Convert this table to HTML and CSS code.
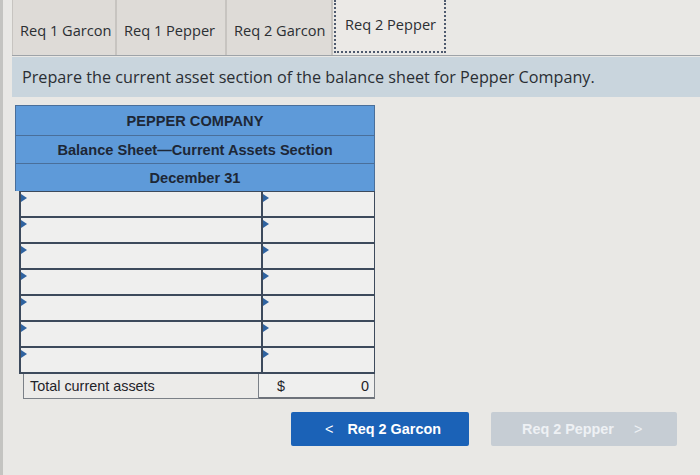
FILE: index.html
```html
<!DOCTYPE html>
<html>
<head>
<meta charset="utf-8">
<link rel="stylesheet" href="styles.css">
</head>
<body>
<div class="app">
  <div class="tabs">
    <div class="tab t1">Req 1 Garcon</div>
    <div class="tab t2">Req 1 Pepper</div>
    <div class="tab t3">Req 2 Garcon</div>
    <div class="tab active">Req 2 Pepper</div>
  </div>
  <div class="prompt">Prepare the current asset section of the balance sheet for Pepper Company.</div>
  <div class="sheet">
    <div class="head">PEPPER COMPANY</div>
    <div class="head">Balance Sheet—Current Assets Section</div>
    <div class="head">December 31</div>
    <div class="rows">
      <div class="row"><div class="cell label"></div><div class="cell amt"></div></div>
      <div class="row"><div class="cell label"></div><div class="cell amt"></div></div>
      <div class="row"><div class="cell label"></div><div class="cell amt"></div></div>
      <div class="row"><div class="cell label"></div><div class="cell amt"></div></div>
      <div class="row"><div class="cell label"></div><div class="cell amt"></div></div>
      <div class="row"><div class="cell label"></div><div class="cell amt"></div></div>
      <div class="row"><div class="cell label"></div><div class="cell amt"></div></div>
    </div>
    <div class="total">
      <div class="tlabel">Total current assets</div>
      <div class="tamt"><span>$</span><span>0</span></div>
    </div>
  </div>
  <div class="nav">
    <div class="btn prev"><span class="chev">&lt;</span>Req 2 Garcon</div>
    <div class="btn next">Req 2 Pepper<span class="chev">&gt;</span></div>
  </div>
</div>
</body>
</html>
```
FILE: styles.css
```css
html, body {
  margin: 0;
  padding: 0;
}
body {
  background: #e9e8e5;
  width: 700px;
  height: 475px;
  overflow: hidden;
}
.app {
  border-left: 3px solid #c4c4c1;
  padding-left: 9px;
  height: 475px;
  box-sizing: border-box;
}
.tabs {
  display: flex;
  height: 55px;
  border-bottom: 1px solid #9ea3a8;
  font-family: "Open Sans", sans-serif;
  font-size: 14.6px;
  color: #2b2f33;
}
.tab {
  background: #dedbd7;
  border-right: 2px solid #c7c4c0;
  display: flex;
  align-items: center;
  padding: 4px 0 0 7px;
  box-sizing: border-box;
  white-space: nowrap;
}
.t1 {
  width: 105px;
  border-left: 1px solid #c7c4c0;
}
.t2 {
  width: 110px;
}
.t3 {
  width: 106px;
}
.tab.active {
  width: 112px;
  background: #ebe9e6;
  border: 2px dotted #4e5a6e;
  border-top: none;
  margin-left: 1px;
  height: 53px;
  padding: 0 0 3px 9px;
}
.prompt {
  margin-top: 1px;
  background: #c9d5dd;
  height: 40px;
  display: flex;
  align-items: center;
  padding-left: 10px;
  font-family: "Open Sans", sans-serif;
  font-size: 16.2px;
  color: #2a2e33;
  white-space: nowrap;
}
.sheet {
  margin: 8px 0 0 3px;
  width: 360px;
  font-family: "Liberation Sans", Arial, sans-serif;
}
.head {
  background: #5e9ad9;
  height: 27px;
  border: 1px solid #4a6f9a;
  border-bottom: none;
  display: flex;
  align-items: center;
  justify-content: center;
  font-weight: bold;
  font-size: 14.6px;
  color: #1d2736;
}
.head:first-child {
  height: 29px;
}
.rows {
  border-top: 1px solid #3d4a5c;
  border-left: 2px solid #3d4a5c;
  border-right: 1px solid #3d4a5c;
  margin-left: 4px;
}
.row {
  display: flex;
  border-bottom: 2px solid #3d4a5c;
  box-sizing: border-box;
  height: 26px;
}
.cell {
  position: relative;
  background: #efefee;
}
.cell::before {
  content: "";
  position: absolute;
  left: 0;
  top: 2px;
  border-top: 4px solid transparent;
  border-bottom: 4px solid transparent;
  border-left: 6px solid #2f63a0;
}
.label {
  width: 240px;
  border-right: 2px solid #3d4a5c;
}
.amt {
  flex: 1;
}
.total {
  display: flex;
  height: 25px;
  margin-left: 8px;
  font-size: 14.4px;
  color: #1f2329;
}
.tlabel {
  width: 236px;
  border: 1px solid #7b8087;
  border-top: none;
  display: flex;
  align-items: center;
  padding-left: 6px;
  box-sizing: border-box;
  background: #ecebe9;
}
.tamt {
  flex: 1;
  border-bottom: 2px solid #6d727a;
  border-right: 1px solid #7b8087;
  display: flex;
  align-items: center;
  justify-content: space-between;
  padding: 0 5px 0 18px;
  background: #efefee;
}
.nav {
  display: flex;
  gap: 22px;
  margin: 13px 0 0 279px;
  font-family: "Liberation Sans", Arial, sans-serif;
  font-weight: bold;
  font-size: 14.4px;
}
.btn {
  height: 34px;
  display: flex;
  align-items: center;
  border-radius: 2px;
}
.prev {
  width: 178px;
  background: #1b62b7;
  color: #ffffff;
  padding-left: 34px;
  box-sizing: border-box;
}
.prev .chev {
  margin-right: 14px;
  font-weight: normal;
}
.next {
  width: 186px;
  background: #c6cdd4;
  color: #eef1f4;
  padding-left: 31px;
  box-sizing: border-box;
}
.next .chev {
  margin-left: 20px;
  font-weight: normal;
}
```
